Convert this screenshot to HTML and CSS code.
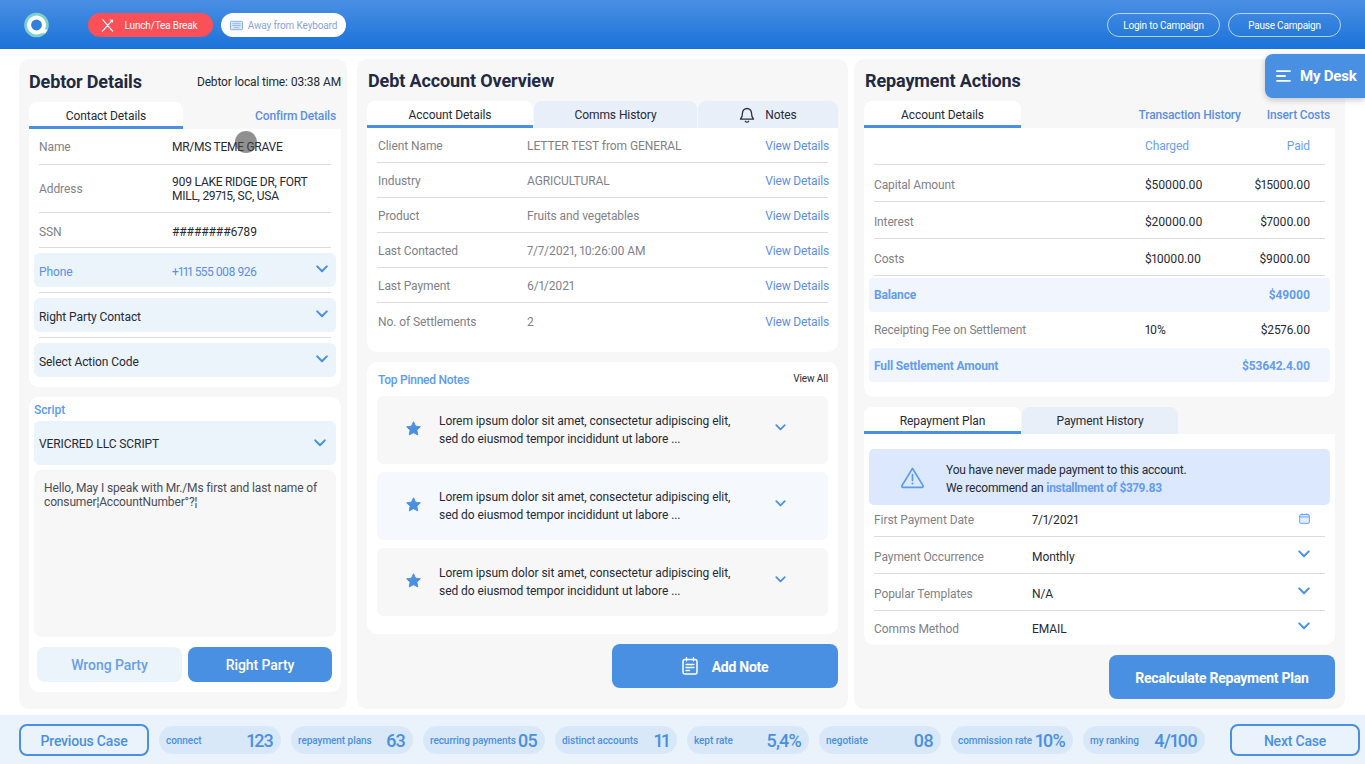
FILE: index.html
```html
<!DOCTYPE html>
<html lang="en">
<head>
<meta charset="utf-8">
<title>Debtor Case</title>
<link rel="stylesheet" href="styles.css">
</head>
<body>
<svg class="defs" width="0" height="0" aria-hidden="true">
  <symbol id="chev" viewBox="0 0 12 8"><path d="M1.2 1.4 6 6.2l4.8-4.8" fill="none" stroke="#4a90e2" stroke-width="2" stroke-linecap="round" stroke-linejoin="round"/></symbol>
  <symbol id="star" viewBox="0 0 16 16"><path d="M8 .8l2.2 4.7 5.1.7-3.7 3.5.9 5.1L8 12.4l-4.5 2.4.9-5.1L.7 6.2l5.1-.7z" fill="#4a90e2" stroke="#4a90e2" stroke-linejoin="round"/></symbol>
</svg>
<header class="topbar">
  <svg class="logo" viewBox="0 0 26 26" aria-hidden="true">
    <circle cx="12.5" cy="13" r="11" fill="#fff"/>
    <circle cx="12.5" cy="13" r="10.9" fill="none" stroke="#7fd0cb" stroke-width="2.8"/>
    <circle cx="12.5" cy="13" r="5.4" fill="#2f7fdc"/>
    <path d="M17 17.500h6.500l-2 3.800h-4.500z" fill="#fff"/>
  </svg>
  <button class="pill pill-red">
    <svg class="pill-icon" viewBox="0 0 14 14" aria-hidden="true"><path d="M2 1l10.500 12M12.500 1.300 1.500 13M10.500 1l2 2" fill="none" stroke="#fff" stroke-width="1.300" stroke-linecap="round"/></svg>
    Lunch/Tea Break
  </button>
  <button class="pill pill-white">
    <svg class="pill-icon" viewBox="0 0 14 10" aria-hidden="true"><rect x=".5" y=".5" width="13" height="9" rx="1" fill="#dce8f8" stroke="#7ea7e6"/><path d="M2.500 3h9M2.500 5h9M4 7.300h6" stroke="#7ea7e6" stroke-width=".8"/></svg>
    Away from Keyboard
  </button>
  <div class="topbar-right">
    <button class="pill pill-outline">Login to Campaign</button>
    <button class="pill pill-outline">Pause Campaign</button>
  </div>
</header>

<button class="mydesk">
  <svg class="mydesk-icon" viewBox="0 0 15 12" aria-hidden="true"><path d="M1 1.200h13M1 6h8M1 10.800h13" stroke="#fff" stroke-width="1.800" stroke-linecap="round"/></svg>
  My Desk
</button>
<div class="cursor-dot"></div>

<main class="board">
  <section class="panel panel-left">
    <div class="panel-head head-left">
      <h2>Debtor Details</h2>
      <span class="local-time">Debtor local time: 03:38 AM</span>
    </div>
    <div class="tabs tabs-left">
      <div class="tab active tab-contact">Contact Details</div>
      <a class="tab-link tab-confirm">Confirm Details</a>
    </div>
    <div class="card card-contact">
      <div class="crow crow-a"><span class="muted">Name</span><span class="caps">MR/MS TEME GRAVE</span></div>
      <div class="crow crow-b"><span class="muted">Address</span><span class="caps">909 LAKE RIDGE DR, FORT<br>MILL, 29715, SC, USA</span></div>
      <div class="crow crow-c"><span class="muted">SSN</span><span>########6789</span></div>
      <div class="selbox sel-phone"><span>Phone</span><span class="phone">+111 555 008 926</span><svg class="chev"><use href="#chev"/></svg></div>
      <div class="sep"></div>
      <div class="selbox"><span class="span2">Right Party Contact</span><svg class="chev"><use href="#chev"/></svg></div>
      <div class="sep"></div>
      <div class="selbox"><span class="span2">Select Action Code</span><svg class="chev"><use href="#chev"/></svg></div>
    </div>
    <div class="card card-script">
      <div class="script-label">Script</div>
      <div class="selbox script-select"><span class="span2">VERICRED LLC SCRIPT</span><svg class="chev"><use href="#chev"/></svg></div>
      <div class="script-text">Hello, May I speak with Mr./Ms first and last name of consumer¦AccountNumber°?¦</div>
      <div class="party-btns">
        <button class="party party-wrong">Wrong Party</button>
        <button class="party party-right">Right Party</button>
      </div>
    </div>
  </section>

  <section class="panel panel-mid">
    <div class="panel-head"><h2>Debt Account Overview</h2></div>
    <div class="tabs">
      <div class="tab active tab-acc">Account Details</div>
      <div class="tab tab-comms">Comms History</div>
      <div class="tab tab-notes">
        <svg class="bell" viewBox="0 0 16 16" aria-hidden="true"><path d="M8 1.500a4.500 4.500 0 0 0-4.500 4.500c0 3.500-1 5-2 6.200h13c-1-1.200-2-2.700-2-6.200A4.500 4.500 0 0 0 8 1.500zM6.300 14.200c.4.700 1 1 1.700 1s1.300-.3 1.700-1" fill="none" stroke="#2b2f3a" stroke-width="1.300" stroke-linejoin="round" stroke-linecap="round"/></svg>
        Notes
      </div>
    </div>
    <div class="card card-acc">
      <div class="arow first"><span class="muted">Client Name</span><span class="muted">LETTER TEST from GENERAL</span><a class="link">View Details</a></div>
      <div class="arow"><span class="muted">Industry</span><span class="muted">AGRICULTURAL</span><a class="link">View Details</a></div>
      <div class="arow"><span class="muted">Product</span><span class="muted">Fruits and vegetables</span><a class="link">View Details</a></div>
      <div class="arow"><span class="muted">Last Contacted</span><span class="muted">7/7/2021, 10:26:00 AM</span><a class="link">View Details</a></div>
      <div class="arow"><span class="muted">Last Payment</span><span class="muted">6/1/2021</span><a class="link">View Details</a></div>
      <div class="arow last"><span class="muted">No. of Settlements</span><span class="muted">2</span><a class="link">View Details</a></div>
    </div>
    <div class="card card-notes">
      <div class="notes-head"><span class="notes-title">Top Pinned Notes</span><a class="view-all">View All</a></div>
      <div class="note"><svg class="star"><use href="#star"/></svg><p>Lorem ipsum dolor sit amet, consectetur adipiscing elit,<br>sed do eiusmod tempor incididunt ut labore ...</p><svg class="chev"><use href="#chev"/></svg></div>
      <div class="note note-blue"><svg class="star"><use href="#star"/></svg><p>Lorem ipsum dolor sit amet, consectetur adipiscing elit,<br>sed do eiusmod tempor incididunt ut labore ...</p><svg class="chev"><use href="#chev"/></svg></div>
      <div class="note"><svg class="star"><use href="#star"/></svg><p>Lorem ipsum dolor sit amet, consectetur adipiscing elit,<br>sed do eiusmod tempor incididunt ut labore ...</p><svg class="chev"><use href="#chev"/></svg></div>
    </div>
    <div class="action-row">
      <button class="action">
        <svg class="note-icon" viewBox="0 0 16 18" aria-hidden="true"><rect x="1" y="2.500" width="14" height="14.500" rx="2" fill="none" stroke="#fff" stroke-width="1.500"/><path d="M4.500.8v3M11.500.8v3M4 7.500h8M4 10.500h8M4 13.500h3.500" stroke="#fff" stroke-width="1.400" stroke-linecap="round"/></svg>
        Add Note
      </button>
    </div>
  </section>

  <section class="panel panel-right">
    <div class="panel-head"><h2>Repayment Actions</h2></div>
    <div class="tabs">
      <div class="tab active tab-repay">Account Details</div>
      <div class="tab-links">
        <a class="tab-link">Transaction History</a>
        <a class="tab-link">Insert Costs</a>
      </div>
    </div>
    <div class="card card-bal">
      <div class="brow bhead"><span></span><a class="link">Charged</a><a class="link right">Paid</a></div>
      <div class="brow"><span class="muted">Capital Amount</span><span>$50000.00</span><span class="right">$15000.00</span></div>
      <div class="brow"><span class="muted">Interest</span><span>$20000.00</span><span class="right">$7000.00</span></div>
      <div class="brow brow-gap"><span class="muted">Costs</span><span>$10000.00</span><span class="right">$9000.00</span></div>
      <div class="brow bbox"><b>Balance</b><span></span><b class="right">$49000</b></div>
      <div class="brow bplain"><span class="muted">Receipting Fee on Settlement</span><span>10%</span><span class="right">$2576.00</span></div>
      <div class="brow bbox bfull"><b>Full Settlement Amount</b><span></span><b class="right">$53642.4.00</b></div>
    </div>
    <div class="tabs tabs-plan">
      <div class="tab active tab-repay">Repayment Plan</div>
      <div class="tab tab-hist">Payment History</div>
    </div>
    <div class="card card-plan">
      <div class="alert">
        <svg class="warn" viewBox="0 0 26 24" aria-hidden="true"><path d="M13 2.500 2 20.500a1.200 1.200 0 0 0 1 1.700h20a1.200 1.200 0 0 0 1-1.700z" fill="none" stroke="#5b9bec" stroke-width="1.800" stroke-linejoin="round"/><path d="M13 9v6" stroke="#5b9bec" stroke-width="1.800" stroke-linecap="round"/><circle cx="13" cy="18.300" r="1.100" fill="#5b9bec"/></svg>
        <p>You have never made payment to this account.<br>We recommend an <b>installment of $379.83</b></p>
      </div>
      <div class="prow prow-first"><span class="muted">First Payment Date</span><span>7/1/2021</span>
        <svg class="cal" viewBox="0 0 12 12" aria-hidden="true"><rect x=".7" y="1.700" width="10.600" height="9.600" rx="1.500" fill="#e3eefb" stroke="#5b9bec"/><path d="M.7 4.300h10.600M3.500.4v2M8.500.4v2" stroke="#5b9bec"/></svg>
      </div>
      <div class="prow"><span class="muted">Payment Occurrence</span><span>Monthly</span><svg class="chev"><use href="#chev"/></svg></div>
      <div class="prow"><span class="muted">Popular Templates</span><span>N/A</span><svg class="chev"><use href="#chev"/></svg></div>
      <div class="prow prow-last"><span class="muted">Comms Method</span><span>EMAIL</span><svg class="chev"><use href="#chev"/></svg></div>
    </div>
    <div class="action-row">
      <button class="action">Recalculate Repayment Plan</button>
    </div>
  </section>
</main>

<footer class="statbar">
  <button class="case-btn">Previous Case</button>
  <div class="stat"><span>connect</span><b>123</b></div>
  <div class="stat"><span>repayment plans</span><b>63</b></div>
  <div class="stat"><span>recurring payments</span><b>05</b></div>
  <div class="stat"><span>distinct accounts</span><b>11</b></div>
  <div class="stat"><span>kept rate</span><b>5,4%</b></div>
  <div class="stat"><span>negotiate</span><b>08</b></div>
  <div class="stat"><span>commission rate</span><b>10%</b></div>
  <div class="stat"><span>my ranking</span><b>4/100</b></div>
  <button class="case-btn case-next">Next Case</button>
</footer>
</body>
</html>
```
FILE: styles.css
```css
* { box-sizing: border-box; }
html, body { margin: 0; height: 764px; overflow: hidden; }
body {
  position: relative;
  width: 1365px;
  background: #fff;
  color: #262a35;
  font-family: Roboto, "Liberation Sans", sans-serif;
  font-size: 12px;
  letter-spacing: -.08px;
  font-variant-numeric: proportional-nums;
  display: flex;
  flex-direction: column;
}
.defs { position: absolute; }
button { font-family: inherit; font-variant-numeric: inherit; letter-spacing: inherit; border: 0; cursor: pointer; padding: 0; }
h2 { margin: 0; }
p { margin: 0; }
b { font-weight: 500; }
.muted { color: #7f8288; }
.right { text-align: right; }
.caps { letter-spacing: -.27px; }
.phone { letter-spacing: -.55px; }
.chev { width: 12px; height: 8px; display: block; }

/* top bar */
.topbar {
  flex: 0 0 49px;
  display: flex;
  align-items: center;
  padding: 0 24px 0 24px;
  background: linear-gradient(180deg, #4a8fe3 0%, #1a72d9 100%);
}
.logo { width: 26px; height: 26px; margin-right: 38px; }
.pill {
  height: 24px;
  width: 125px;
  border-radius: 12px;
  font-size: 10px;
  display: flex;
  align-items: center;
  justify-content: center;
  padding-top: 1px;
}
.pill-icon { width: 13px; height: 13px; margin-right: 10px; }
.pill-red { background: #fb5057; color: #fff; margin-right: 8px; letter-spacing: -.14px; padding-right: 2px; }
.pill-white { background: #fff; color: #8aa3e2; letter-spacing: -.14px; }
.pill-white .pill-icon { margin-right: 5px; }
.topbar-right { margin-left: auto; display: flex; gap: 8px; }
.pill-outline { width: 113px; background: transparent; border: 1px solid rgba(255,255,255,.65); color: #fff; letter-spacing: -.2px; }

.mydesk {
  position: absolute;
  top: 54px;
  right: 0;
  width: 100px;
  height: 44px;
  background: #4a90e2;
  color: #fff;
  border-radius: 8px 0 0 8px;
  box-shadow: 0 2px 6px rgba(0,0,0,.22);
  font-size: 15px;
  font-weight: 700;
  letter-spacing: -.2px;
  display: flex;
  align-items: center;
  padding-left: 11px;
  z-index: 3;
}
.mydesk-icon { width: 15px; height: 12px; margin-right: 9px; }
.cursor-dot {
  position: absolute;
  left: 235px;
  top: 131px;
  width: 22px;
  height: 22px;
  border-radius: 50%;
  background: rgba(70,70,70,.6);
  z-index: 3;
}

/* board */
.board {
  flex: 0 0 666px;
  display: flex;
  padding: 10px 0 6px 19px;
}
.panel {
  background: #f7f7f7;
  border-radius: 10px;
  height: 650px;
  padding: 0 10px;
}
.panel-left { width: 328px; padding: 0 6px 0 10px; margin-right: 10px; }
.panel-mid { width: 491px; margin-right: 6px; }
.panel-right { width: 491px; }
.panel-head { height: 42px; display: flex; align-items: center; padding-top: 1px; }
.panel-head h2 { font-size: 18px; font-weight: 700; color: #1f2a44; letter-spacing: -.12px; }
.panel-mid .panel-head { padding-left: 1px; }
.panel-right .panel-head { padding-left: 1px; }
.head-left { height: 43px; justify-content: space-between; padding-top: 2px; }
.local-time { font-size: 12px; letter-spacing: -.16px; padding-top: 1px; }

/* tabs */
.tabs { display: flex; height: 27px; align-items: stretch; }
.tab {
  display: flex;
  align-items: center;
  justify-content: center;
  background: #e8eff9;
  border-radius: 8px 8px 0 0;
  font-size: 12px;
}
.tab.active { background: #fff; border-bottom: 3px solid #4a90e2; border-radius: 8px 8px 0 0; padding-top: 3px; }
.tab-contact { width: 154px; }
.tab-link { color: #5b8fe6; font-weight: 500; font-size: 12px; letter-spacing: -.16px; }
.tab-confirm { margin-left: auto; margin-right: 5px; align-self: center; padding-top: 1px; }
.tab-acc { width: 166px; margin-right: 1px; }
.tab-comms { width: 163px; margin-right: 1px; }
.tab-notes { width: 140px; }
.bell { width: 16px; height: 16px; margin-right: 10px; }
.tab-repay { width: 157px; }
.tab-hist { width: 156px; margin-left: 1px; }
.tab-links { margin-left: auto; margin-right: 5px; display: flex; gap: 26px; align-items: center; }
.tabs-plan { margin-top: 10px; }

/* cards */
.card { background: #fff; border-radius: 0 0 10px 10px; }
.link { color: #5b8fe6; }

.card-contact { padding: 0 5px 10px; height: 258px; }
.crow {
  display: grid;
  grid-template-columns: 133px 1fr;
  align-items: center;
  margin: 0 5px;
  border-bottom: 1px solid #ddd;
  line-height: 14px;
}
.crow-a { height: 36px; padding-top: 1px; }
.crow-b { height: 48px; padding-top: 1px; }
.crow-c { height: 35px; padding-top: 3px; }
.selbox {
  position: relative;
  height: 34px;
  background: #ebf3fb;
  border-radius: 6px;
  margin-top: 5px;
  padding: 3px 5px 0;
  display: grid;
  grid-template-columns: 133px 1fr 12px;
  align-items: center;
}
.selbox .chev { position: absolute; right: 8px; top: 12px; }
.sel-phone { color: #5b8fe6; }
.span2 { grid-column: 1 / 3; }
.sep { height: 1px; background: #ddd; margin: 5px 5px 0; }

.card-script {
  margin-top: 10px;
  height: 295px;
  border-radius: 10px;
  padding: 0 5px;
}
.script-label { height: 24px; padding-top: 6px; color: #5b9bf0; font-weight: 500; }
.script-select { height: 44px; margin-top: 0; padding-top: 2px; }
.script-select .chev { right: 10px; top: 18px; }
.script-text {
  height: 167px;
  margin-top: 5px;
  background: #f7f7f7;
  border-radius: 8px;
  padding: 11px 10px;
  line-height: 14px;
  color: #4a4d57;
  letter-spacing: -.14px;
}
.party-btns { display: flex; gap: 6px; margin-top: 10px; padding: 0 3px; }
.party { height: 35px; width: 145px; border-radius: 8px; font-size: 14px; font-weight: 500; padding-top: 1px; }
.party-wrong { background: #ebf3fb; color: #6a9fe8; }
.party-right { width: 144px; background: #4a90e2; color: #fff; }

.card-acc { height: 224px; padding: 0 10px; }
.arow {
  display: grid;
  grid-template-columns: 149px 1fr auto;
  align-items: center;
  height: 35px;
  padding: 2px 0 0 1px;
  border-bottom: 1px solid #ddd;
}
.arow .link { margin-right: -1px; letter-spacing: -.15px; }
.arow.last { border-bottom: 0; }

.card-notes { margin-top: 10px; height: 272px; border-radius: 10px; padding: 0 10px; }
.notes-head { height: 34px; display: flex; justify-content: space-between; align-items: center; padding-top: 2px; }
.notes-title { color: #5b9bf0; font-weight: 500; letter-spacing: -.25px; padding-left: 1px; }
.view-all { font-size: 10px; margin-top: -3px; }
.note {
  height: 68px;
  background: #f7f7f7;
  border-radius: 6px;
  margin-bottom: 8px;
  display: grid;
  grid-template-columns: 62px 1fr 47px;
  align-items: center;
  line-height: 18px;
  letter-spacing: -.06px;
}
.note-blue { background: #f5f9fe; }
.star { width: 15px; height: 15px; justify-self: center; margin: -3px 0 0 10px; }
.note .chev { justify-self: start; margin: -5px 0 0 -6px; width: 11px; height: 7px; }

.action-row { display: flex; justify-content: flex-end; margin-top: 10px; }
.action {
  width: 226px;
  height: 44px;
  background: #4a90e2;
  color: #fff;
  border-radius: 8px;
  font-size: 14px;
  font-weight: 700;
  letter-spacing: -.25px;
  display: flex;
  align-items: center;
  justify-content: center;
  padding-top: 2px;
}
.note-icon { width: 16px; height: 18px; margin: -2px 14px 0 0; }

.card-bal { height: 269px; padding: 0 5px; }
.brow {
  display: grid;
  grid-template-columns: 271px 1fr auto;
  align-items: center;
  height: 37px;
  margin: 0 5px;
  padding: 3px 15px 0 0;
  border-bottom: 1px solid #ddd;
  letter-spacing: -.14px;
}
.brow .link { color: #6ba0f0; }
.bhead { padding-top: 0; }
.brow-gap { margin-bottom: 2px; }
.bbox {
  height: 34px;
  background: #f1f6fe;
  border-bottom: 0;
  border-radius: 4px;
  color: #639cf2;
  margin: 0;
  padding: 0 20px 0 5px;
}
.bbox b { font-weight: 700; }
.bfull { padding-top: 2px; }
.bplain { height: 36px; border-bottom: 0; padding-top: 0; }

.card-plan { height: 211px; padding: 15px 5px 0; }
.alert {
  height: 56px;
  background: #dbe8fd;
  border-radius: 5px;
  display: grid;
  grid-template-columns: 77px 1fr;
  align-items: center;
  line-height: 18px;
  letter-spacing: -.18px;
  padding-top: 4px;
}
.alert b { color: #639cf2; font-weight: 700; letter-spacing: -.3px; }
.warn { width: 25px; height: 23px; justify-self: start; margin: -4px 0 0 31px; }
.prow {
  display: grid;
  grid-template-columns: 158px 1fr 28px;
  align-items: center;
  height: 37px;
  margin: 0 5px;
  padding-top: 4px;
  border-bottom: 1px solid #ddd;
}
.prow-first { height: 32px; padding: 0 0 2px; }
.prow-last { height: 34px; border-bottom: 0; padding-top: 2px; }
.prow .chev { margin: -6px 0 0 1px; }
.cal { width: 11px; height: 11px; margin: -2px 0 0 2px; }

/* footer */
.statbar {
  flex: 1;
  background: #eaf3fc;
  display: flex;
  align-items: center;
  padding: 0 5px 0 19px;
}
.case-btn {
  width: 130px;
  height: 32px;
  border: 2px solid #4a90e2;
  border-radius: 8px;
  background: #eaf3fc;
  color: #4a90e2;
  font-size: 14px;
  font-weight: 500;
  letter-spacing: -.2px;
  padding-top: 2px;
  margin-right: 10px;
}
.case-next { margin: 0 0 0 25px; }
.stat {
  width: 122px;
  height: 28px;
  border-radius: 14px;
  background: #d9e8f9;
  margin-right: 10px;
  display: flex;
  align-items: center;
  justify-content: space-between;
  padding: 2px 8px 0 7px;
  color: #4a90e2;
  font-size: 10px;
  font-weight: 500;
  letter-spacing: -.05px;
  white-space: nowrap;
}
.stat:last-of-type { margin-right: 0; }
.stat b { font-size: 18px; font-weight: 500; letter-spacing: -.8px; }
```
